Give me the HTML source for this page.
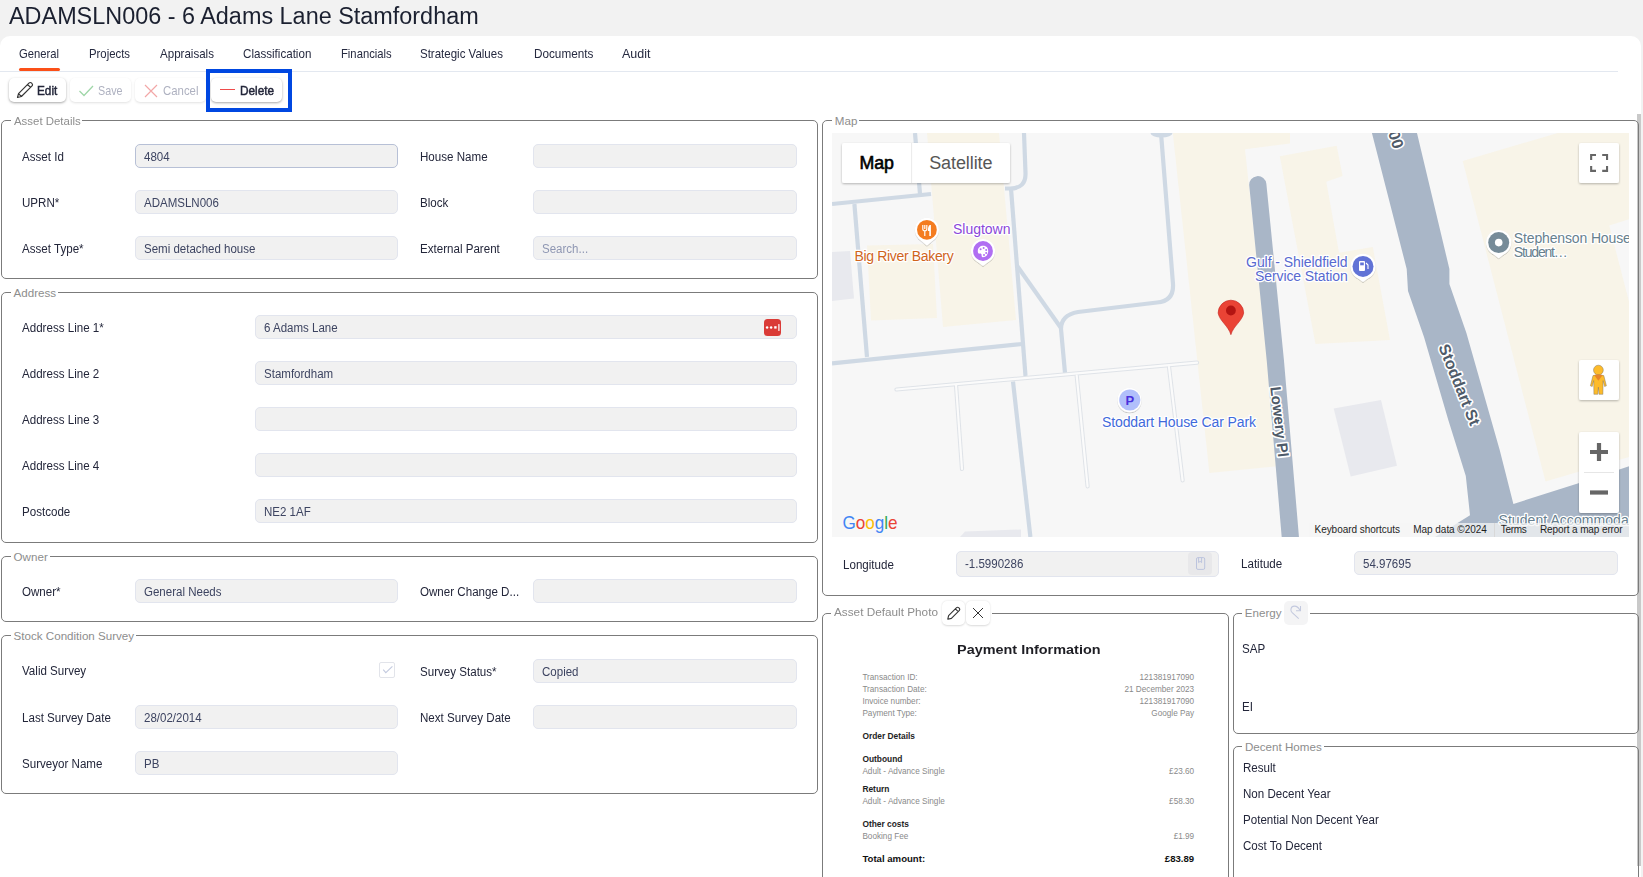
<!DOCTYPE html>
<html><head><meta charset="utf-8"><title>ADAMSLN006 - 6 Adams Lane Stamfordham</title>
<style>
html,body{margin:0;padding:0;overflow:hidden;}
body{width:1643px;height:877px;overflow:hidden;background:#f2f2f2;position:relative;font-family:"Liberation Sans",sans-serif;}
.t{position:absolute;white-space:nowrap;}
.b{position:absolute;}
</style></head><body>
<div class="b" style="left:0;top:36px;width:1641px;height:860px;background:#fff;border-radius:10px 10px 0 0"></div>
<div class="b" style="left:1637px;top:114px;width:4px;height:752px;background:#c9c9c9"></div>
<div class="t" style="left:9.00px;top:0.33px;font-size:23.3px;line-height:33px;color:#1b2030;font-weight:normal;transform:scaleX(1.0047);transform-origin:0 0;">ADAMSLN006 - 6 Adams Lane Stamfordham</div>
<div class="t" style="left:19.40px;top:45.97px;font-size:12.2px;line-height:17px;color:#262a40;font-weight:normal;transform:scaleX(0.9216);transform-origin:0 0;">General</div>
<div class="t" style="left:89.10px;top:45.97px;font-size:12.2px;line-height:17px;color:#262a40;font-weight:normal;transform:scaleX(0.9326);transform-origin:0 0;">Projects</div>
<div class="t" style="left:159.80px;top:45.97px;font-size:12.2px;line-height:17px;color:#262a40;font-weight:normal;transform:scaleX(0.9480);transform-origin:0 0;">Appraisals</div>
<div class="t" style="left:242.80px;top:45.97px;font-size:12.2px;line-height:17px;color:#262a40;font-weight:normal;transform:scaleX(0.9517);transform-origin:0 0;">Classification</div>
<div class="t" style="left:340.80px;top:45.97px;font-size:12.2px;line-height:17px;color:#262a40;font-weight:normal;transform:scaleX(0.9231);transform-origin:0 0;">Financials</div>
<div class="t" style="left:420.40px;top:45.97px;font-size:12.2px;line-height:17px;color:#262a40;font-weight:normal;transform:scaleX(0.9439);transform-origin:0 0;">Strategic Values</div>
<div class="t" style="left:533.50px;top:45.97px;font-size:12.2px;line-height:17px;color:#262a40;font-weight:normal;transform:scaleX(0.9627);transform-origin:0 0;">Documents</div>
<div class="t" style="left:622.00px;top:45.97px;font-size:12.2px;line-height:17px;color:#262a40;font-weight:normal;transform:scaleX(1.0249);transform-origin:0 0;">Audit</div>
<div class="b" style="left:19px;top:68px;width:41px;height:3px;background:#fb5018;border-radius:2px"></div>
<div class="b" style="left:0px;top:71px;width:1618px;height:1px;background:#e3e8f0"></div>
<div class="b" style="left:9px;top:78px;width:57px;height:24px;background:#fff;border-radius:5px;box-shadow:0 1px 2.5px rgba(0,0,0,0.35)"></div>
<div class="b" style="left:70px;top:78px;width:61px;height:24px;background:#fff;border-radius:5px;box-shadow:0 1px 2.5px rgba(0,0,0,0.12)"></div>
<div class="b" style="left:135px;top:78px;width:71px;height:24px;background:#fff;border-radius:5px;box-shadow:0 1px 2.5px rgba(0,0,0,0.12)"></div>
<div class="b" style="left:211px;top:78px;width:71px;height:24px;background:#fff;border-radius:5px;box-shadow:0 1px 2.5px rgba(0,0,0,0.35)"></div>
<svg class="b" style="left:16px;top:81px" width="18" height="18" viewBox="0 0 18 18"><path d="M1.5,16.5 L2.5,12.6 L12.9,2.2 Q14.3,0.8 15.7,2.2 L15.8,2.3 Q17.2,3.7 15.8,5.1 L5.4,15.5 Z M2.5,12.6 L5.4,15.5 M11.6,3.5 L14.5,6.4" fill="none" stroke="#333" stroke-width="1.15" stroke-linejoin="round"/></svg>
<div class="t" style="left:37.40px;top:82.33px;font-size:12.6px;line-height:18px;color:#23263a;font-weight:normal;transform:scaleX(0.9350);transform-origin:0 0;-webkit-text-stroke:0.45px #23263a;">Edit</div>
<svg class="b" style="left:78px;top:83px" width="17" height="15" viewBox="0 0 17 15"><path d="M1.5 8 L6 12.5 L15 3" fill="none" stroke="#9fd6a8" stroke-width="1.3"/></svg>
<div class="t" style="left:98.20px;top:82.33px;font-size:12.6px;line-height:18px;color:#aeb1c0;font-weight:normal;transform:scaleX(0.8531);transform-origin:0 0;">Save</div>
<svg class="b" style="left:143px;top:83px" width="16" height="16" viewBox="0 0 16 16"><path d="M2 2 L14 14 M14 2 L2 14" fill="none" stroke="#f2a7a7" stroke-width="1.2"/></svg>
<div class="t" style="left:163.30px;top:82.33px;font-size:12.6px;line-height:18px;color:#aeb1c0;font-weight:normal;transform:scaleX(0.9051);transform-origin:0 0;">Cancel</div>
<div class="b" style="left:219.5px;top:88.6px;width:15.2px;height:1.3px;background:#ef4b4b"></div>
<div class="t" style="left:239.70px;top:82.33px;font-size:12.6px;line-height:18px;color:#23263a;font-weight:normal;transform:scaleX(0.9390);transform-origin:0 0;-webkit-text-stroke:0.45px #23263a;">Delete</div>
<div class="b" style="left:206px;top:69px;width:86px;height:43px;border:4px solid #0047e1;box-sizing:border-box"></div>
<div class="b" style="left:1px;top:120px;width:817px;height:159px;border:1px solid #7b7b7b;border-radius:5px;box-sizing:border-box"></div>
<div class="b" style="left:10.6px;top:118px;width:71.7px;height:4px;background:#fff"></div>
<div class="t" style="left:13.60px;top:112.88px;font-size:11.6px;line-height:16px;color:#8d8d8d;font-weight:normal;transform:scaleX(0.9854);transform-origin:0 0;">Asset Details</div>
<div class="t" style="left:21.90px;top:149.04px;font-size:12px;line-height:17px;color:#23263a;font-weight:normal;transform:scaleX(0.9650);transform-origin:0 0;">Asset Id</div>
<div class="b" style="left:135px;top:144px;width:263px;height:24px;background:#f1f1f1;border:1px solid #b7c0d6;border-radius:5px;box-sizing:border-box"></div>
<div class="t" style="left:144.00px;top:149.04px;font-size:12px;line-height:17px;color:#3d4461;font-weight:normal;transform:scaleX(0.9600);transform-origin:0 0;">4804</div>
<div class="t" style="left:420.20px;top:149.04px;font-size:12px;line-height:17px;color:#23263a;font-weight:normal;transform:scaleX(0.9650);transform-origin:0 0;">House Name</div>
<div class="b" style="left:533px;top:144px;width:264px;height:24px;background:#f1f1f1;border:1px solid #e2e5ee;border-radius:5px;box-sizing:border-box"></div>
<div class="t" style="left:21.90px;top:195.04px;font-size:12px;line-height:17px;color:#23263a;font-weight:normal;transform:scaleX(0.9650);transform-origin:0 0;">UPRN*</div>
<div class="b" style="left:135px;top:190px;width:263px;height:24px;background:#f1f1f1;border:1px solid #e2e5ee;border-radius:5px;box-sizing:border-box"></div>
<div class="t" style="left:144.00px;top:195.04px;font-size:12px;line-height:17px;color:#3d4461;font-weight:normal;transform:scaleX(0.9600);transform-origin:0 0;">ADAMSLN006</div>
<div class="t" style="left:420.20px;top:195.04px;font-size:12px;line-height:17px;color:#23263a;font-weight:normal;transform:scaleX(0.9650);transform-origin:0 0;">Block</div>
<div class="b" style="left:533px;top:190px;width:264px;height:24px;background:#f1f1f1;border:1px solid #e2e5ee;border-radius:5px;box-sizing:border-box"></div>
<div class="t" style="left:21.90px;top:241.04px;font-size:12px;line-height:17px;color:#23263a;font-weight:normal;transform:scaleX(0.9650);transform-origin:0 0;">Asset Type*</div>
<div class="b" style="left:135px;top:236px;width:263px;height:24px;background:#f1f1f1;border:1px solid #e2e5ee;border-radius:5px;box-sizing:border-box"></div>
<div class="t" style="left:144.00px;top:241.04px;font-size:12px;line-height:17px;color:#3d4461;font-weight:normal;transform:scaleX(0.9600);transform-origin:0 0;">Semi detached house</div>
<div class="t" style="left:420.20px;top:241.04px;font-size:12px;line-height:17px;color:#23263a;font-weight:normal;transform:scaleX(0.9650);transform-origin:0 0;">External Parent</div>
<div class="b" style="left:533px;top:236px;width:264px;height:24px;background:#f1f1f1;border:1px solid #e2e5ee;border-radius:5px;box-sizing:border-box"></div>
<div class="t" style="left:542.00px;top:241.04px;font-size:12px;line-height:17px;color:#8f97b3;font-weight:normal;transform:scaleX(0.9600);transform-origin:0 0;">Search...</div>
<div class="b" style="left:1px;top:292px;width:817px;height:251px;border:1px solid #7b7b7b;border-radius:5px;box-sizing:border-box"></div>
<div class="b" style="left:10.6px;top:290px;width:47.5541015625px;height:4px;background:#fff"></div>
<div class="t" style="left:13.60px;top:284.88px;font-size:11.6px;line-height:16px;color:#8d8d8d;font-weight:normal;">Address</div>
<div class="t" style="left:21.50px;top:320.04px;font-size:12px;line-height:17px;color:#23263a;font-weight:normal;transform:scaleX(0.9650);transform-origin:0 0;">Address Line 1*</div>
<div class="b" style="left:255px;top:315px;width:542px;height:24px;background:#f1f1f1;border:1px solid #e2e5ee;border-radius:5px;box-sizing:border-box"></div>
<div class="t" style="left:264.00px;top:320.04px;font-size:12px;line-height:17px;color:#3d4461;font-weight:normal;transform:scaleX(0.9600);transform-origin:0 0;">6 Adams Lane</div>
<div class="t" style="left:21.50px;top:366.04px;font-size:12px;line-height:17px;color:#23263a;font-weight:normal;transform:scaleX(0.9650);transform-origin:0 0;">Address Line 2</div>
<div class="b" style="left:255px;top:361px;width:542px;height:24px;background:#f1f1f1;border:1px solid #e2e5ee;border-radius:5px;box-sizing:border-box"></div>
<div class="t" style="left:264.00px;top:366.04px;font-size:12px;line-height:17px;color:#3d4461;font-weight:normal;transform:scaleX(0.9600);transform-origin:0 0;">Stamfordham</div>
<div class="t" style="left:21.50px;top:412.04px;font-size:12px;line-height:17px;color:#23263a;font-weight:normal;transform:scaleX(0.9650);transform-origin:0 0;">Address Line 3</div>
<div class="b" style="left:255px;top:407px;width:542px;height:24px;background:#f1f1f1;border:1px solid #e2e5ee;border-radius:5px;box-sizing:border-box"></div>
<div class="t" style="left:21.50px;top:458.04px;font-size:12px;line-height:17px;color:#23263a;font-weight:normal;transform:scaleX(0.9650);transform-origin:0 0;">Address Line 4</div>
<div class="b" style="left:255px;top:453px;width:542px;height:24px;background:#f1f1f1;border:1px solid #e2e5ee;border-radius:5px;box-sizing:border-box"></div>
<div class="t" style="left:21.50px;top:504.04px;font-size:12px;line-height:17px;color:#23263a;font-weight:normal;transform:scaleX(0.9650);transform-origin:0 0;">Postcode</div>
<div class="b" style="left:255px;top:499px;width:542px;height:24px;background:#f1f1f1;border:1px solid #e2e5ee;border-radius:5px;box-sizing:border-box"></div>
<div class="t" style="left:264.00px;top:504.04px;font-size:12px;line-height:17px;color:#3d4461;font-weight:normal;transform:scaleX(0.9600);transform-origin:0 0;">NE2 1AF</div>
<div class="b" style="left:763.5px;top:318.5px;width:17px;height:17px;background:#da3b37;border-radius:3.5px"></div>
<svg class="b" style="left:763.5px;top:318.5px" width="17" height="17" viewBox="0 0 17 17"><circle cx="3.1" cy="8.4" r="1.25" fill="#fff"/><circle cx="7.1" cy="8.4" r="1.25" fill="#fff"/><rect x="10.2" y="7.2" width="2.4" height="2.4" fill="#fff"/><rect x="14.3" y="5" width="1.2" height="7" rx="0.6" fill="#fff"/></svg>
<div class="b" style="left:1px;top:556px;width:817px;height:66px;border:1px solid #7b7b7b;border-radius:5px;box-sizing:border-box"></div>
<div class="b" style="left:10.6px;top:554px;width:39.165625px;height:4px;background:#fff"></div>
<div class="t" style="left:13.60px;top:548.88px;font-size:11.6px;line-height:16px;color:#8d8d8d;font-weight:normal;">Owner</div>
<div class="t" style="left:21.90px;top:583.94px;font-size:12px;line-height:17px;color:#23263a;font-weight:normal;transform:scaleX(0.9650);transform-origin:0 0;">Owner*</div>
<div class="b" style="left:135px;top:579px;width:263px;height:24px;background:#f1f1f1;border:1px solid #e2e5ee;border-radius:5px;box-sizing:border-box"></div>
<div class="t" style="left:144.00px;top:584.04px;font-size:12px;line-height:17px;color:#3d4461;font-weight:normal;transform:scaleX(0.9600);transform-origin:0 0;">General Needs</div>
<div class="t" style="left:420.20px;top:583.94px;font-size:12px;line-height:17px;color:#23263a;font-weight:normal;transform:scaleX(0.9650);transform-origin:0 0;">Owner Change D...</div>
<div class="b" style="left:533px;top:579px;width:264px;height:24px;background:#f1f1f1;border:1px solid #e2e5ee;border-radius:5px;box-sizing:border-box"></div>
<div class="b" style="left:1px;top:635px;width:817px;height:159px;border:1px solid #7b7b7b;border-radius:5px;box-sizing:border-box"></div>
<div class="b" style="left:10.6px;top:633px;width:125.5708984375px;height:4px;background:#fff"></div>
<div class="t" style="left:13.60px;top:627.88px;font-size:11.6px;line-height:16px;color:#8d8d8d;font-weight:normal;">Stock Condition Survey</div>
<div class="t" style="left:21.90px;top:663.04px;font-size:12px;line-height:17px;color:#23263a;font-weight:normal;transform:scaleX(0.9650);transform-origin:0 0;">Valid Survey</div>
<div class="b" style="left:379px;top:662px;width:16px;height:16px;border:1px solid #e2e4ea;border-radius:2px;box-sizing:border-box;background:#fff"></div>
<svg class="b" style="left:379px;top:662px" width="16" height="16" viewBox="0 0 16 16"><path d="M4.2 7.6 L6.8 10.6 L13.4 4.3" fill="none" stroke="#c3cadf" stroke-width="1.1"/></svg>
<div class="t" style="left:420.20px;top:663.74px;font-size:12px;line-height:17px;color:#23263a;font-weight:normal;transform:scaleX(0.9650);transform-origin:0 0;">Survey Status*</div>
<div class="b" style="left:533px;top:659px;width:264px;height:24px;background:#f1f1f1;border:1px solid #e2e5ee;border-radius:5px;box-sizing:border-box"></div>
<div class="t" style="left:542.00px;top:664.04px;font-size:12px;line-height:17px;color:#3d4461;font-weight:normal;transform:scaleX(0.9600);transform-origin:0 0;">Copied</div>
<div class="t" style="left:21.90px;top:709.54px;font-size:12px;line-height:17px;color:#23263a;font-weight:normal;transform:scaleX(0.9650);transform-origin:0 0;">Last Survey Date</div>
<div class="b" style="left:135px;top:705px;width:263px;height:24px;background:#f1f1f1;border:1px solid #e2e5ee;border-radius:5px;box-sizing:border-box"></div>
<div class="t" style="left:144.00px;top:710.04px;font-size:12px;line-height:17px;color:#3d4461;font-weight:normal;transform:scaleX(0.9600);transform-origin:0 0;">28/02/2014</div>
<div class="t" style="left:420.20px;top:710.04px;font-size:12px;line-height:17px;color:#23263a;font-weight:normal;transform:scaleX(0.9650);transform-origin:0 0;">Next Survey Date</div>
<div class="b" style="left:533px;top:705px;width:264px;height:24px;background:#f1f1f1;border:1px solid #e2e5ee;border-radius:5px;box-sizing:border-box"></div>
<div class="t" style="left:21.90px;top:755.84px;font-size:12px;line-height:17px;color:#23263a;font-weight:normal;transform:scaleX(0.9650);transform-origin:0 0;">Surveyor Name</div>
<div class="b" style="left:135px;top:751px;width:263px;height:24px;background:#f1f1f1;border:1px solid #e2e5ee;border-radius:5px;box-sizing:border-box"></div>
<div class="t" style="left:144.00px;top:756.04px;font-size:12px;line-height:17px;color:#3d4461;font-weight:normal;transform:scaleX(0.9600);transform-origin:0 0;">PB</div>
<div class="b" style="left:822px;top:120px;width:817px;height:476px;border:1px solid #7b7b7b;border-radius:5px;box-sizing:border-box"></div>
<div class="b" style="left:831.8px;top:118px;width:27.565624999999955px;height:4px;background:#fff"></div>
<div class="t" style="left:834.80px;top:112.88px;font-size:11.6px;line-height:16px;color:#8d8d8d;font-weight:normal;">Map</div>
<svg class="b" style="left:832px;top:133px" width="797" height="404" viewBox="0 0 797 404" font-family="Liberation Sans, sans-serif">
<rect width="797" height="404" fill="#f7f7f7"/>
<polygon points="95,0 167,0 184,187 111,194" fill="#f8f4e8"/>
<polygon points="35,112.5 101,111 105,185 39,187.5" fill="#f8f4e8"/>
<polygon points="340.8,0 458,0 458,10.5 413,16.3 447,333 377.4,340" fill="#f8f4e8"/>
<polygon points="447.8,23.3 504.7,12.8 510.6,43 494.3,48.8 507,119.8 540.8,114 558,207 483.5,211" fill="#f8f4e8"/>
<polygon points="630.7,28 725.7,0 797,0 797,324 713.5,348.5" fill="#f8f4e8"/>
<polygon points="777.3,92.6 797,86.2 797,168.4" fill="#f7f7f7"/>
<polygon points="0,119 18,118 22,165.5 0,168" fill="#e8e9ee"/>
<polygon points="501.7,275.5 549,267 565,332.7 518.7,343.6" fill="#e8e9ee"/>
<polygon points="128,404 133,398.5 189,396.5 189,404" fill="#e8e9ee"/>
<path d="M83,0 L88,61" fill="none" stroke="#cfd9e4" stroke-width="4.2" stroke-linecap="butt" stroke-linejoin="round" />
<path d="M0,71 L99,61" fill="none" stroke="#cfd9e4" stroke-width="4.2" stroke-linecap="butt" stroke-linejoin="round" />
<path d="M22.4,71 L35,224" fill="none" stroke="#cfd9e4" stroke-width="4.2" stroke-linecap="butt" stroke-linejoin="round" />
<path d="M192,0 L193.5,40 Q194,55.5 178,55.5 L173,55.5" fill="none" stroke="#cfd9e4" stroke-width="4.2" stroke-linecap="butt" stroke-linejoin="round" />
<path d="M179,55.5 L193.5,243" fill="none" stroke="#cfd9e4" stroke-width="4.2" stroke-linecap="butt" stroke-linejoin="round" />
<path d="M185,132.7 L229,195" fill="none" stroke="#cfd9e4" stroke-width="4.2" stroke-linecap="butt" stroke-linejoin="round" />
<ellipse cx="329.5" cy="0" rx="11" ry="4.6" fill="#cfd9e4"/>
<path d="M329,0 L341,151 Q342,168 325,169.5 L246,179 Q229,182 229,196 L233,240" fill="none" stroke="#cfd9e4" stroke-width="4.2" stroke-linecap="butt" stroke-linejoin="round" />
<path d="M0,230.4 L190,211" fill="none" stroke="#cfd9e4" stroke-width="4.2" stroke-linecap="butt" stroke-linejoin="round" />
<path d="M181,248.6 L198.4,404" fill="none" stroke="#cfd9e4" stroke-width="4.2" stroke-linecap="butt" stroke-linejoin="round" />
<path d="M64.5,256.5 L365,229.7" fill="none" stroke="#dfe3e8" stroke-width="4.2" stroke-linecap="round" stroke-linejoin="round" />
<path d="M124,252 L130,336" fill="none" stroke="#dfe3e8" stroke-width="4.2" stroke-linecap="round" stroke-linejoin="round" />
<path d="M244.7,242.6 L255.6,353.4" fill="none" stroke="#dfe3e8" stroke-width="4.2" stroke-linecap="round" stroke-linejoin="round" />
<path d="M337,234 L350.6,347.3" fill="none" stroke="#dfe3e8" stroke-width="4.2" stroke-linecap="round" stroke-linejoin="round" />
<path d="M64.5,256.5 L365,229.7" fill="none" stroke="#fbfbfb" stroke-width="2.2" stroke-linecap="round" stroke-linejoin="round" />
<path d="M124,252 L130,336" fill="none" stroke="#fbfbfb" stroke-width="2.2" stroke-linecap="round" stroke-linejoin="round" />
<path d="M244.7,242.6 L255.6,353.4" fill="none" stroke="#fbfbfb" stroke-width="2.2" stroke-linecap="round" stroke-linejoin="round" />
<path d="M337,234 L350.6,347.3" fill="none" stroke="#fbfbfb" stroke-width="2.2" stroke-linecap="round" stroke-linejoin="round" />
<path d="M425.8,51.7 L443.3,227 L458.5,406" fill="none" stroke="#a9b6c7" stroke-width="17.2" stroke-linecap="round" stroke-linejoin="round" />
<polygon points="539.4,-2 584.5,-2 617.4,136 617.4,151 634.4,200 667.7,317 681.4,371 747.2,350 797,333.2 797,404 603,404 626.8,389.2 638,382.2 633.8,343 616.3,287 592,204 576,158 574.7,136" fill="#a9b6c7"/>
<defs><filter id="psh" x="-50%" y="-50%" width="200%" height="200%"><feDropShadow dx="0" dy="0.6" stdDeviation="0.7" flood-color="#000" flood-opacity="0.35"/></filter><filter id="csh" x="-20%" y="-20%" width="140%" height="160%"><feDropShadow dx="0" dy="1" stdDeviation="1.2" flood-color="#000" flood-opacity="0.28"/></filter></defs>
<text x="447.5" y="294" font-size="15" font-weight="bold" fill="#4f5b69" stroke="#fff" stroke-width="3.2" stroke-linejoin="round" paint-order="stroke" letter-spacing="0.000" text-anchor="middle" transform="rotate(83.5 447.5 288.8)">Lowery Pl</text>
<text x="627.5" y="257.3" font-size="16" font-weight="bold" fill="#4f5b69" stroke="#fff" stroke-width="3.2" stroke-linejoin="round" paint-order="stroke" letter-spacing="0.000" text-anchor="middle" transform="rotate(68 627.5 251.7)">Stoddart St</text>
<text x="564" y="12" font-size="16" font-weight="bold" fill="#4f5b69" stroke="#fff" stroke-width="3.2" stroke-linejoin="round" paint-order="stroke" letter-spacing="0.000" text-anchor="middle" transform="rotate(72 564 6.5)">00</text>
<g filter="url(#psh)"><path d="M86.188,105.149 L93.7,111.8 Q94.9,113.0 96.10000000000001,111.8 L103.61200000000001,105.149 Z" fill="#fff"/><circle cx="94.9" cy="96.8" r="12.100000000000001" fill="#fff"/></g><circle cx="94.9" cy="96.8" r="9.9" fill="#f47c20"/>
<path d="M90.8,92 V96 Q90.8,97.8 92.8,97.8 Q94.8,97.8 94.8,96 V92 M92.8,92 V96 M92.8,97.8 V103" fill="none" stroke="#fff" stroke-width="1.15"/><path d="M97.8,92 C96.3,92.8 95.9,95 95.9,98 H97.3 V103 H98.9 V92 Z" fill="#fff"/>
<text x="22.4" y="127.8" font-size="14" font-weight="normal" fill="#d0641c" stroke="#fff" stroke-width="2.5" stroke-linejoin="round" paint-order="stroke" letter-spacing="-0.330" text-anchor="start">Big River Bakery</text>
<text x="121" y="101" font-size="14" font-weight="normal" fill="#8b47d9" stroke="#fff" stroke-width="2.5" stroke-linejoin="round" paint-order="stroke" letter-spacing="-0.013" text-anchor="start">Slugtown</text>
<g filter="url(#psh)"><path d="M142.288,126.349 L149.8,132.2 Q151,133.4 152.2,132.2 L159.712,126.349 Z" fill="#fff"/><circle cx="151" cy="118" r="12.100000000000001" fill="#fff"/></g><circle cx="151" cy="118" r="9.9" fill="#b06ef2"/>
<path d="M151,112.8 C155,112.8 156.4,115.6 156.2,118.6 C156,122.4 153.2,124.2 150.8,124.2 C149.4,124.2 149.6,122.8 149.6,122 C149.6,121 148.8,120.4 147.8,120.6 C146.4,120.8 145.8,120 145.8,118.2 C145.8,114.8 148.4,112.8 151,112.8 Z" fill="#fff"/><circle cx="148.6" cy="116.2" r="1" fill="#b06ef2"/><circle cx="151.6" cy="115" r="1" fill="#b06ef2"/><circle cx="154.2" cy="117" r="1" fill="#b06ef2"/><circle cx="154.2" cy="120" r="1" fill="#b06ef2"/><circle cx="152" cy="122" r="1" fill="#b06ef2"/>
<g filter="url(#psh)"><path d="M521.856,142.163 L529.8,148.2 Q531,149.4 532.2,148.2 L540.144,142.163 Z" fill="#fff"/><circle cx="531" cy="133.4" r="12.7" fill="#fff"/></g><circle cx="531" cy="133.4" r="10.5" fill="#6173d6"/>
<rect x="527" y="128" width="6" height="10" rx="1" fill="#fff"/><rect x="528.2" y="129.5" width="3.6" height="2.8" fill="#6173d6"/><path d="M534,130 L536,132 V136" fill="none" stroke="#fff" stroke-width="1.1"/>
<text x="515.6" y="134" font-size="14" font-weight="normal" fill="#5869cf" stroke="#fff" stroke-width="2.5" stroke-linejoin="round" paint-order="stroke" letter-spacing="-0.066" text-anchor="end">Gulf - Shieldfield</text>
<text x="515.6" y="147.8" font-size="14" font-weight="normal" fill="#5869cf" stroke="#fff" stroke-width="2.5" stroke-linejoin="round" paint-order="stroke" letter-spacing="-0.111" text-anchor="end">Service Station</text>
<g filter="url(#psh)"><path d="M657.556,118.363 L665.5,124.60000000000001 Q666.7,125.80000000000001 667.9000000000001,124.60000000000001 L675.844,118.363 Z" fill="#fff"/><circle cx="666.7" cy="109.6" r="12.7" fill="#fff"/></g><circle cx="666.7" cy="109.6" r="10.5" fill="#768b98"/>
<circle cx="666.7" cy="109.6" r="3.8" fill="#fff"/>
<text x="681.8" y="110" font-size="14" font-weight="normal" fill="#67808e" stroke="#fff" stroke-width="2.5" stroke-linejoin="round" paint-order="stroke" letter-spacing="-0.139" text-anchor="start">Stephenson House</text>
<text x="681.8" y="124" font-size="14" font-weight="normal" fill="#67808e" stroke="#fff" stroke-width="2.5" stroke-linejoin="round" paint-order="stroke" letter-spacing="-1.180" text-anchor="start">Student…</text>
<g filter="url(#psh)"><circle cx="297.5" cy="267" r="12.2" fill="#fff"/></g><circle cx="297.8" cy="267" r="10.6" fill="#b1bffb"/>
<text x="297.9" y="271.8" font-size="13" font-weight="bold" fill="#4a30dc" text-anchor="middle">P</text>
<text x="270" y="293.7" font-size="14" font-weight="normal" fill="#3f6adb" stroke="#fff" stroke-width="2.5" stroke-linejoin="round" paint-order="stroke" letter-spacing="-0.109" text-anchor="start">Stoddart House Car Park</text>
<text x="666.5" y="392.3" font-size="14" font-weight="normal" fill="#67808f" stroke="#fff" stroke-width="2.5" stroke-linejoin="round" paint-order="stroke" letter-spacing="0.065" text-anchor="start">Student Accommoda</text>
<path d="M398.9,201.7 C396.5,193 387.5,188 386.1,180 A12.8,12.8 0 1 1 411.7,180 C410.3,188 401.3,193 398.9,201.7 Z" fill="#ea4335" stroke="#c5221f" stroke-width="0.6"/><circle cx="398.9" cy="177.5" r="4.9" fill="#b31412"/>
<g filter="url(#csh)"><rect x="10" y="10" width="168" height="40" rx="2" fill="#fff"/></g>
<line x1="79.6" y1="10" x2="79.6" y2="50" stroke="#ebebeb" stroke-width="1"/>
<text x="27.4" y="36" font-size="18" fill="#000" stroke="#000" stroke-width="0.6" transform="translate(27.4 0) scale(0.9881 1) translate(-27.4 0)">Map</text>
<text x="97.2" y="36" font-size="18" fill="#565656" letter-spacing="-0.092">Satellite</text>
<g filter="url(#csh)"><rect x="747" y="10" width="40" height="40" rx="2" fill="#fff"/></g>
<path d="M759.15,27 V22.05 H764 M770.2,22.05 H775.05 V27 M775.05,33 V37.85 H770.2 M764,37.85 H759.15 V33" fill="none" stroke="#666" stroke-width="2.1"/>
<g filter="url(#csh)"><rect x="747" y="227" width="40" height="40" rx="2" fill="#fff"/></g>
<circle cx="766.4" cy="237.1" r="4.9" fill="#fdbb2a" stroke="#7a7060" stroke-width="0.45"/><path d="M761,242.6 Q766.4,240.6 771.8,242.6 L774.4,252.8 L772.6,253.5 L771.1,247.6 L770.9,261.3 H767 L766.4,254.2 L765.8,261.3 H761.9 L761.7,247.6 L760.2,253.5 L758.4,252.8 Z" fill="#fdbb2a" stroke="#7a7060" stroke-width="0.45" stroke-linejoin="round"/><path d="M762.3,242.2 L766.4,247.8 L770.5,242.2 Q766.4,241 762.3,242.2 Z" fill="#e8852a"/>
<g filter="url(#csh)"><rect x="747" y="299" width="40" height="81" rx="2" fill="#fff"/></g>
<line x1="752" y1="339.5" x2="782" y2="339.5" stroke="#e6e6e6" stroke-width="1"/>
<path d="M758,319 H776 M767,310 V328" stroke="#666" stroke-width="4.2"/><path d="M758,359.5 H776" stroke="#666" stroke-width="4.2"/>
<text x="0" y="0" font-size="18" transform="translate(10.4 396.2) scale(0.9510 1)"><tspan fill="#4285f4">G</tspan><tspan fill="#ea4335">o</tspan><tspan fill="#fbbc05">o</tspan><tspan fill="#4285f4">g</tspan><tspan fill="#34a853">l</tspan><tspan fill="#ea4335">e</tspan></text>
<rect x="477" y="390" width="320" height="14" fill="#f5f5f5" fill-opacity="0.75"/>
<line x1="662.5" y1="390" x2="662.5" y2="404" stroke="#d8d8d8" stroke-width="1"/>
<text x="482.5" y="399.5" font-size="10" fill="#1f1f1f" letter-spacing="-0.039">Keyboard shortcuts</text>
<text x="581.3" y="399.5" font-size="10" fill="#1f1f1f" letter-spacing="-0.045">Map data ©2024</text>
<text x="668.8" y="399.5" font-size="10" fill="#1f1f1f" letter-spacing="-0.330">Terms</text>
<text x="708" y="399.5" font-size="10" fill="#1f1f1f" letter-spacing="-0.110">Report a map error</text>
</svg>
<div class="t" style="left:842.90px;top:556.64px;font-size:12px;line-height:17px;color:#23263a;font-weight:normal;transform:scaleX(0.9650);transform-origin:0 0;">Longitude</div>
<div class="b" style="left:956px;top:551px;width:263px;height:26px;background:#f1f1f1;border:1px solid #e2e5ee;border-radius:5px;box-sizing:border-box"></div>
<div class="t" style="left:965.00px;top:556.04px;font-size:12px;line-height:17px;color:#3d4461;font-weight:normal;transform:scaleX(0.9600);transform-origin:0 0;">-1.5990286</div>
<div class="b" style="left:1188px;top:552px;width:24px;height:23px;background:#e8e8ea;border-radius:4px"></div>
<svg class="b" style="left:1193px;top:555px" width="16" height="17" viewBox="0 0 16 17"><rect x="3.5" y="2.6" width="8.2" height="11.8" rx="1.4" fill="none" stroke="#bcc4de" stroke-width="1"/><path d="M5.6,2.6 V7.6 L7.1,6.3 L8.6,7.6 V2.6" fill="none" stroke="#bcc4de" stroke-width="1"/></svg>
<div class="t" style="left:1241.40px;top:556.24px;font-size:12px;line-height:17px;color:#23263a;font-weight:normal;transform:scaleX(0.9650);transform-origin:0 0;">Latitude</div>
<div class="b" style="left:1354px;top:551px;width:264px;height:24px;background:#f1f1f1;border:1px solid #e2e5ee;border-radius:5px;box-sizing:border-box"></div>
<div class="t" style="left:1363.00px;top:556.04px;font-size:12px;line-height:17px;color:#3d4461;font-weight:normal;transform:scaleX(0.9600);transform-origin:0 0;">54.97695</div>
<div class="b" style="left:822px;top:613px;width:407px;height:287px;border:1px solid #7b7b7b;border-radius:5px;box-sizing:border-box"></div>
<div class="b" style="left:831.3px;top:611px;width:160.70000000000005px;height:4px;background:#fff"></div>
<div class="t" style="left:834.30px;top:604.48px;font-size:11.6px;line-height:16px;color:#8d8d8d;font-weight:normal;transform:scaleX(1.0144);transform-origin:0 0;">Asset Default Photo</div>
<div class="b" style="left:942px;top:601px;width:23px;height:24px;background:#fff;border-radius:5px;box-shadow:0 0.5px 2px rgba(0,0,0,0.15)"></div>
<div class="b" style="left:966px;top:601px;width:24px;height:24px;background:#fff;border-radius:5px;box-shadow:0 0.5px 2px rgba(0,0,0,0.15)"></div>
<svg class="b" style="left:945px;top:605px" width="17" height="17" viewBox="0 0 17 17"><path d="M2.8 14.2 L3.6 10.6 L11.6 2.6 Q12.6 1.8 13.6 2.6 L14.4 3.4 Q15.2 4.4 14.4 5.4 L6.4 13.4 Z M10.4 3.8 L13.2 6.6" fill="none" stroke="#333" stroke-width="1.1" stroke-linejoin="round"/></svg>
<svg class="b" style="left:970px;top:605px" width="16" height="16" viewBox="0 0 16 16"><path d="M3 3 L13 13 M13 3 L3 13" fill="none" stroke="#333" stroke-width="1"/></svg>
<div class="t" style="left:956.50px;top:639.79px;font-size:13.6px;line-height:19px;color:#1e1e24;font-weight:bold;transform:scaleX(1.0616);transform-origin:0 0;">Payment Information</div>
<div class="t" style="left:862.40px;top:671.86px;font-size:8.2px;line-height:11px;color:#8a8a8a;font-weight:normal;">Transaction ID:</div>
<div class="t" style="left:1139.47px;top:671.86px;font-size:8.2px;line-height:11px;color:#8a8a8a;font-weight:normal;">121381917090</div>
<div class="t" style="left:862.40px;top:683.96px;font-size:8.2px;line-height:11px;color:#8a8a8a;font-weight:normal;">Transaction Date:</div>
<div class="t" style="left:1124.46px;top:683.96px;font-size:8.2px;line-height:11px;color:#8a8a8a;font-weight:normal;">21 December 2023</div>
<div class="t" style="left:862.40px;top:696.06px;font-size:8.2px;line-height:11px;color:#8a8a8a;font-weight:normal;">Invoice number:</div>
<div class="t" style="left:1139.47px;top:696.06px;font-size:8.2px;line-height:11px;color:#8a8a8a;font-weight:normal;">121381917090</div>
<div class="t" style="left:862.40px;top:708.16px;font-size:8.2px;line-height:11px;color:#8a8a8a;font-weight:normal;">Payment Type:</div>
<div class="t" style="left:1151.35px;top:708.16px;font-size:8.2px;line-height:11px;color:#8a8a8a;font-weight:normal;">Google Pay</div>
<div class="t" style="left:862.40px;top:729.59px;font-size:8.4px;line-height:12px;color:#1e1e24;font-weight:bold;">Order Details</div>
<div class="t" style="left:862.40px;top:752.69px;font-size:8.4px;line-height:12px;color:#1e1e24;font-weight:bold;">Outbound</div>
<div class="t" style="left:862.40px;top:766.26px;font-size:8.2px;line-height:11px;color:#8a8a8a;font-weight:normal;">Adult - Advance Single</div>
<div class="t" style="left:1169.12px;top:766.26px;font-size:8.2px;line-height:11px;color:#8a8a8a;font-weight:normal;">£23.60</div>
<div class="t" style="left:862.40px;top:783.09px;font-size:8.4px;line-height:12px;color:#1e1e24;font-weight:bold;">Return</div>
<div class="t" style="left:862.40px;top:796.36px;font-size:8.2px;line-height:11px;color:#8a8a8a;font-weight:normal;">Adult - Advance Single</div>
<div class="t" style="left:1169.12px;top:796.36px;font-size:8.2px;line-height:11px;color:#8a8a8a;font-weight:normal;">£58.30</div>
<div class="t" style="left:862.40px;top:817.99px;font-size:8.4px;line-height:12px;color:#1e1e24;font-weight:bold;">Other costs</div>
<div class="t" style="left:862.40px;top:831.06px;font-size:8.2px;line-height:11px;color:#8a8a8a;font-weight:normal;">Booking Fee</div>
<div class="t" style="left:1173.68px;top:831.06px;font-size:8.2px;line-height:11px;color:#8a8a8a;font-weight:normal;">£1.99</div>
<div class="t" style="left:862.40px;top:852.07px;font-size:9.6px;line-height:13px;color:#111;font-weight:bold;">Total amount:</div>
<div class="t" style="left:1164.84px;top:852.07px;font-size:9.6px;line-height:13px;color:#111;font-weight:bold;">£83.89</div>
<div class="b" style="left:1233px;top:613px;width:406px;height:121px;border:1px solid #7b7b7b;border-radius:5px;box-sizing:border-box"></div>
<div class="b" style="left:1241.8px;top:611px;width:68.20000000000005px;height:4px;background:#fff"></div>
<div class="t" style="left:1244.80px;top:604.88px;font-size:11.6px;line-height:16px;color:#8d8d8d;font-weight:normal;">Energy</div>
<div class="b" style="left:1284px;top:601px;width:24px;height:24px;background:#f4f4f5;border-radius:5px"></div>
<svg class="b" style="left:1287px;top:604px" width="18" height="18" viewBox="0 0 18 18"><path d="M12.8,5.9 C11.4,3.4 9.7,2.1 7.7,2.1 C5.4,2.1 3.9,3.9 3.9,6 C3.9,7.1 4.4,7.9 5.2,8.7 L11.7,14.6 M13.5,2.1 V6.7 H9" fill="none" stroke="#c3c9de" stroke-width="1.05"/></svg>
<div class="t" style="left:1242.00px;top:641.04px;font-size:12px;line-height:17px;color:#23263a;font-weight:normal;transform:scaleX(0.9650);transform-origin:0 0;">SAP</div>
<div class="t" style="left:1242.00px;top:698.94px;font-size:12px;line-height:17px;color:#23263a;font-weight:normal;transform:scaleX(0.9650);transform-origin:0 0;">EI</div>
<div class="b" style="left:1233px;top:746px;width:406px;height:154px;border:1px solid #7b7b7b;border-radius:5px;box-sizing:border-box"></div>
<div class="b" style="left:1242px;top:744px;width:81.7197265625px;height:4px;background:#fff"></div>
<div class="t" style="left:1245.00px;top:739.48px;font-size:11.6px;line-height:16px;color:#8d8d8d;font-weight:normal;">Decent Homes</div>
<div class="t" style="left:1242.50px;top:759.94px;font-size:12px;line-height:17px;color:#23263a;font-weight:normal;transform:scaleX(0.9650);transform-origin:0 0;">Result</div>
<div class="t" style="left:1242.50px;top:785.94px;font-size:12px;line-height:17px;color:#23263a;font-weight:normal;transform:scaleX(0.9650);transform-origin:0 0;">Non Decent Year</div>
<div class="t" style="left:1242.50px;top:811.94px;font-size:12px;line-height:17px;color:#23263a;font-weight:normal;transform:scaleX(0.9650);transform-origin:0 0;">Potential Non Decent Year</div>
<div class="t" style="left:1242.50px;top:837.94px;font-size:12px;line-height:17px;color:#23263a;font-weight:normal;transform:scaleX(0.9650);transform-origin:0 0;">Cost To Decent</div>
</body></html>
